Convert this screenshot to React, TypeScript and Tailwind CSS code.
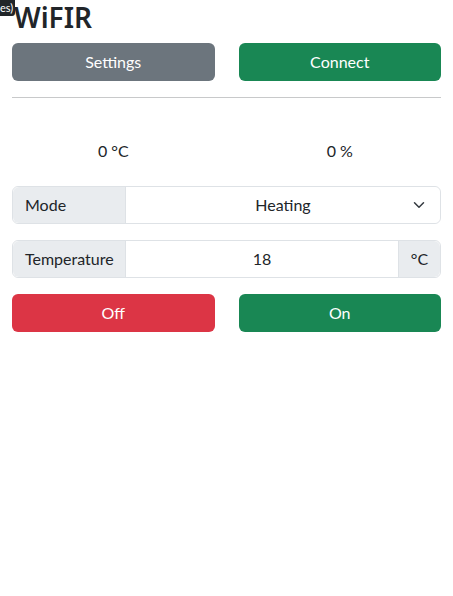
import React, { useState } from 'react';

const font = { fontFamily: 'Lato, "Noto Sans", "Liberation Sans", sans-serif' };

export default function App() {
  const [mode, setMode] = useState('Heating');
  const [temp, setTemp] = useState('18');

  return (
    <div className="relative min-h-screen bg-white text-[#212529] text-base" style={font}>
      {/* Tooltip fragment */}
      <div className="absolute left-0 top-0 z-10 rounded-br-[3px] bg-[#212529] pb-[1px] pr-[2px] text-[11px] leading-[15px] text-white">
        es)
      </div>

      <div className="px-3">
        <h1 className="mb-2 pl-[2px] text-[28px] font-semibold leading-[1.25]" style={{ fontFamily: '"Noto Sans", Lato, sans-serif' }}>WiFIR</h1>

        <div className="grid grid-cols-2 gap-6">
          <button className="h-[38px] rounded-md bg-[#6c757d] text-white">Settings</button>
          <button className="h-[38px] rounded-md bg-[#198754] text-white">Connect</button>
        </div>

        <hr className="my-4 border-t border-[#c8c9ca]" />

        <div className="grid grid-cols-2 gap-6 pt-[25px] pb-[23px] leading-6">
          <div className="text-center">0 °C</div>
          <div className="text-center">0 %</div>
        </div>

        <div className="mb-4 flex h-[38px] rounded-md border border-[#dee2e6]">
          <span className="flex w-[113px] items-center rounded-l-md border-r border-[#dee2e6] bg-[#e9ecef] px-3">Mode</span>
          <div className="relative flex-1">
            <select
              value={mode}
              onChange={(e) => setMode(e.target.value)}
              className="h-full w-full appearance-none rounded-r-md bg-white px-3 text-center outline-none"
            >
              <option>Heating</option>
              <option>Cooling</option>
              <option>Fan</option>
            </select>
            <svg className="pointer-events-none absolute right-[15px] top-1/2 -translate-y-1/2" width="12" height="12" viewBox="0 0 16 16" fill="none" stroke="#343a40" strokeWidth="2" strokeLinecap="round" strokeLinejoin="round">
              <path d="M2 5l6 6 6-6" />
            </svg>
          </div>
        </div>

        <div className="mb-4 flex h-[38px] rounded-md border border-[#dee2e6]">
          <span className="flex w-[113px] items-center rounded-l-md border-r border-[#dee2e6] bg-[#e9ecef] px-3">Temperature</span>
          <input
            value={temp}
            onChange={(e) => setTemp(e.target.value)}
            className="min-w-0 flex-1 bg-white px-3 text-center outline-none"
          />
          <span className="flex w-[42px] items-center justify-center rounded-r-md border-l border-[#dee2e6] bg-[#e9ecef]">°C</span>
        </div>

        <div className="grid grid-cols-2 gap-6">
          <button className="h-[38px] rounded-md bg-[#dc3545] text-white">Off</button>
          <button className="h-[38px] rounded-md bg-[#198754] text-white">On</button>
        </div>
      </div>
    </div>
  );
}
